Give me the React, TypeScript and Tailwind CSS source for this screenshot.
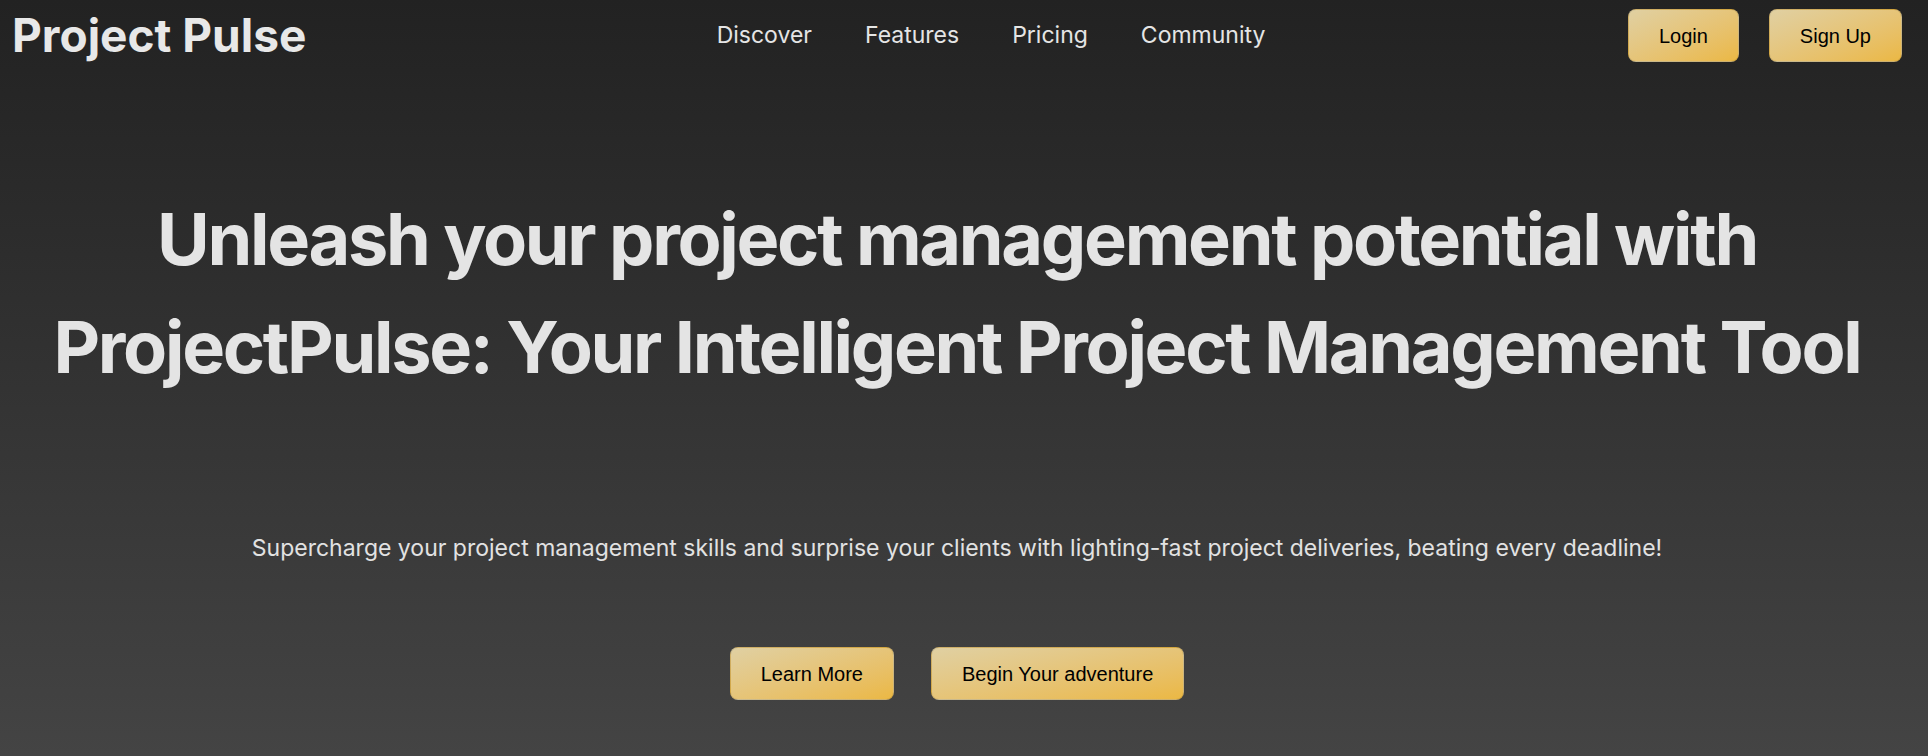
import React from 'react';

const navLinks = ['Discover', 'Features', 'Pricing', 'Community'];

const GoldButton: React.FC<{ label: string; className?: string }> = ({ label, className = '' }) => (
  <button
    className={`h-[53px] rounded-lg border border-black/10 bg-linear-to-br from-[#e0d0a2] to-[#ebb843] px-[30px] text-[20px] text-black font-['Liberation_Sans',Arial,sans-serif] ${className}`}
  >
    {label}
  </button>
);

export default function App() {
  return (
    <div className="min-h-[756px] w-full bg-linear-to-b from-[#222222] to-[#444444] pl-3 pr-[26px] font-['Inter',sans-serif] text-[#e5e5e5]">
      {/* Top bar */}
      <header className="flex h-[71px] items-center">
        <div className="flex-1">
          <span className="text-[46px] font-bold text-[#e8e8e8]">Project Pulse</span>
        </div>
        <nav className="ml-[68px] flex items-center gap-[53px] text-[23px] text-[#e5e5e5]">
          {navLinks.map((link) => (
            <a key={link} href="#" className="leading-none">
              {link}
            </a>
          ))}
        </nav>
        <div className="flex flex-1 justify-end gap-[30px]">
          <GoldButton label="Login" />
          <GoldButton label="Sign Up" />
        </div>
      </header>

      {/* Hero */}
      <section className="flex flex-col items-center text-center">
        <h1 className="mt-[114px] text-[72px] font-bold leading-[108px] tracking-[-0.032em] text-[#e4e4e4]">
          Unleash your project management potential with
          <br />
          ProjectPulse: Your Intelligent Project Management Tool
        </h1>
        <p className="mt-[131px] text-[23px] leading-[33px] text-[#e2e2e2]">
          Supercharge your project management skills and surprise your clients with lighting-fast project deliveries, beating every deadline!
        </p>
        <div className="mt-[82px] flex gap-[37px]">
          <GoldButton label="Learn More" />
          <GoldButton label="Begin Your adventure" />
        </div>
      </section>
    </div>
  );
}
